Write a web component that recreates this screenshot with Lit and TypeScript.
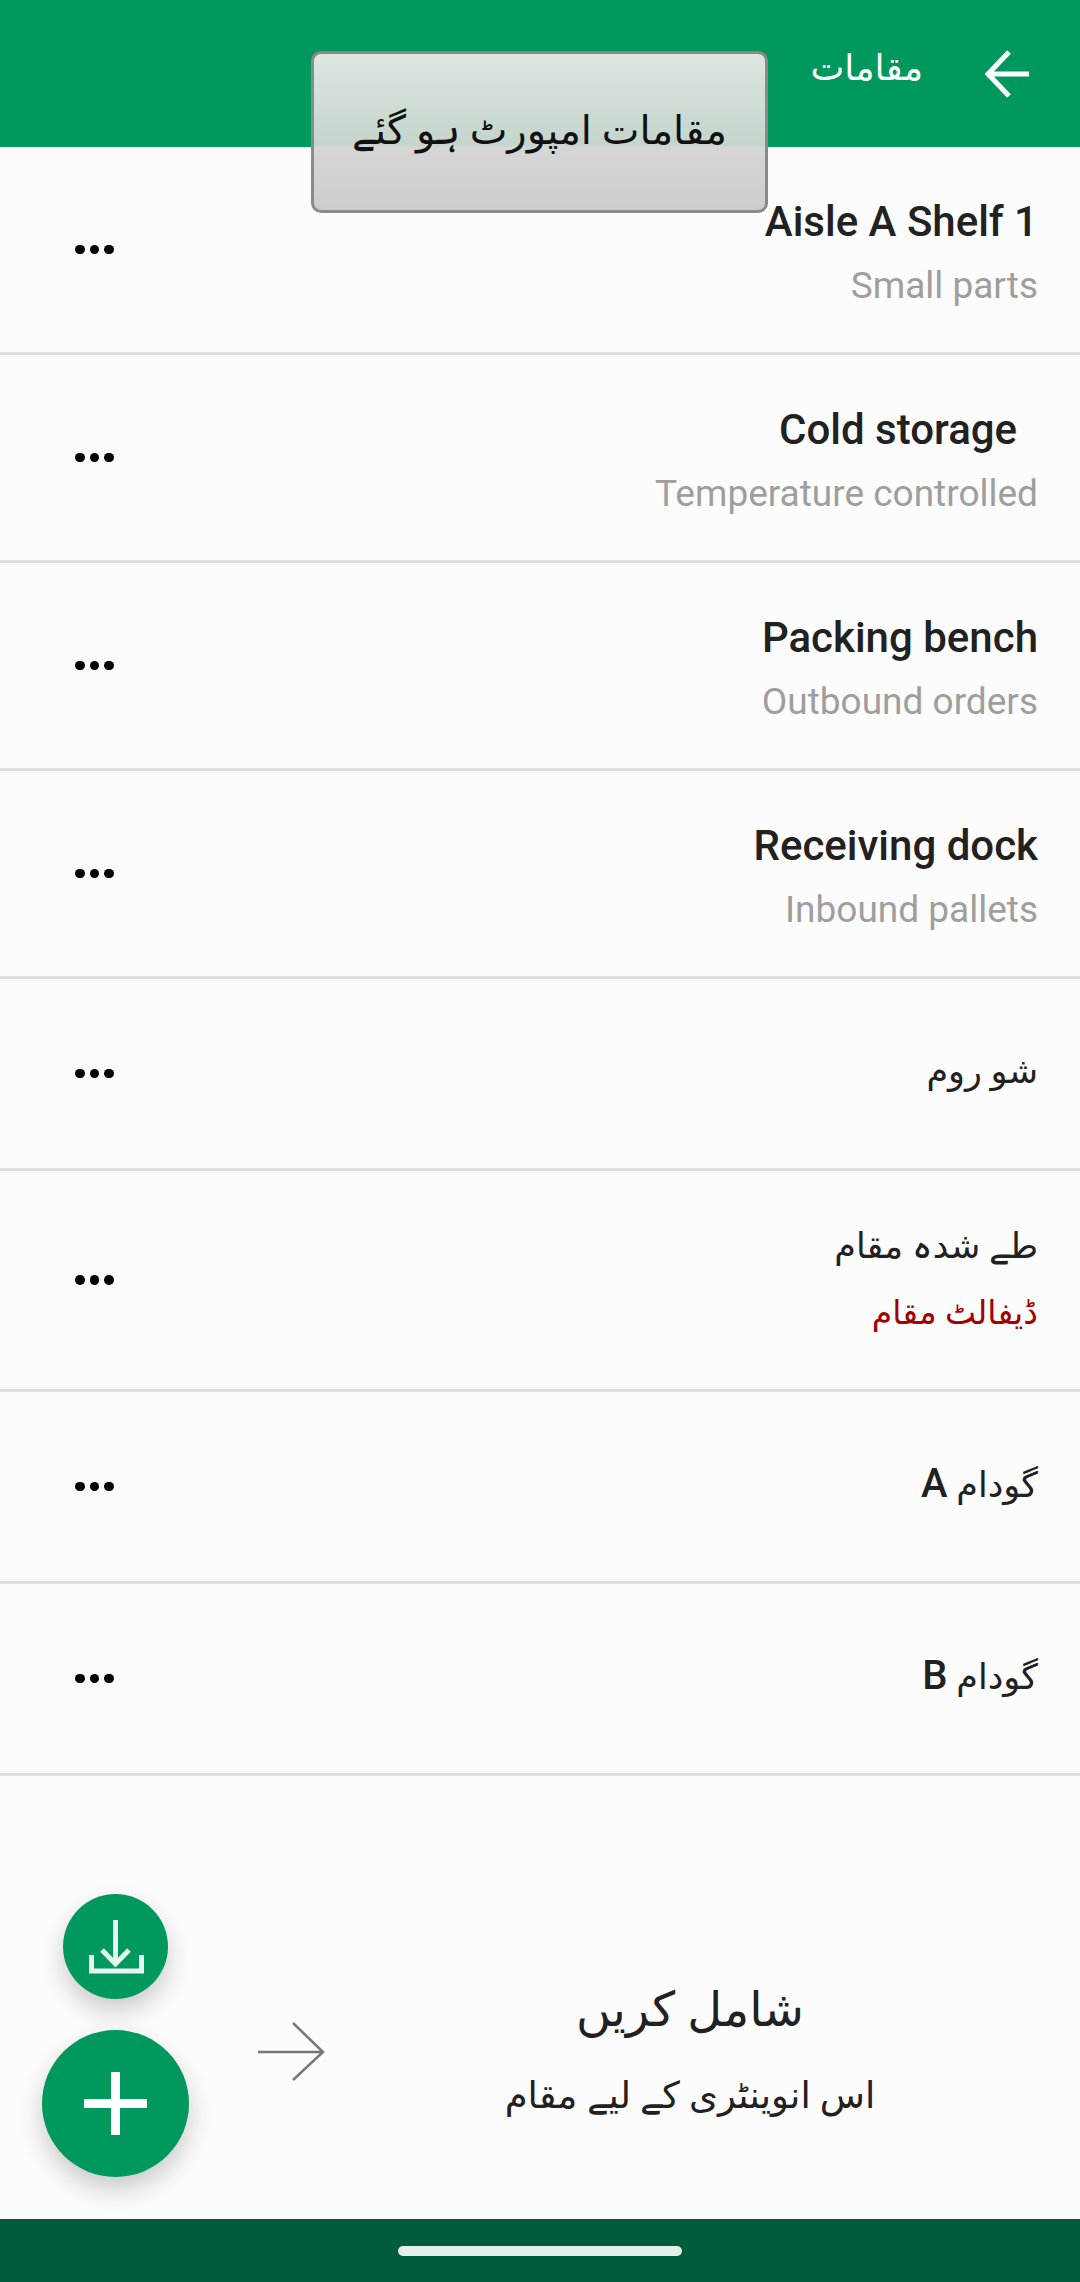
import { LitElement, html, css } from "lit";
import { customElement } from "lit/decorators.js";

type Row = { title: string; mark?: string; sub?: string; kind: "latin" | "urdu-one" | "urdu-two"; red?: boolean };

const rows: Row[] = [
  { title: "Aisle A Shelf 1", sub: "Small parts", kind: "latin" },
  { title: "\u00a0\u00a0Cold storage", sub: "Temperature controlled", kind: "latin" },
  { title: "Packing bench", sub: "Outbound orders", kind: "latin" },
  { title: "Receiving dock", sub: "Inbound pallets", kind: "latin" },
  { title: "شو روم", kind: "urdu-one" },
  { title: "طے شدہ مقام", sub: "ڈیفالٹ مقام", kind: "urdu-two", red: true },
  { title: "گودام ", mark: "A", kind: "urdu-one" },
  { title: "گودام ", mark: "B", kind: "urdu-one" },
];

@customElement("app-root")
export class AppRoot extends LitElement {
  static styles = css`
    :host {
      display: block;
      height: 2282px;
      font-family: "Roboto", "DejaVu Sans", sans-serif;
      color: #212121;
      background: #fcfcfc;
    }
    .page {
      position: relative;
      height: 100%;
      display: flex;
      flex-direction: column;
      direction: rtl;
      overflow: hidden;
    }
    .bar {
      flex: 0 0 147px;
      box-sizing: border-box;
      background: #00985d;
      display: flex;
      align-items: flex-start;
      padding: 50px 51px 0 0;
      gap: 62px;
      color: #fff;
    }
    .bar svg { display: block; width: 44px; height: 48px; }
    .bar h1 { margin: -7px 0 0; font-size: 36px; font-weight: 400; line-height: 50px; }
    .toast {
      position: absolute;
      left: 311px;
      top: 51px;
      width: 457px;
      height: 162px;
      box-sizing: border-box;
      border: 3px solid #8a8a8a;
      border-radius: 10px;
      background: linear-gradient(#dbe7df 0%, #c5d5cc 58%, #d6d6d6 60%, #cdcdcd 100%);
      display: flex;
      align-items: center;
      justify-content: center;
      padding-bottom: 4px;
      font-size: 40px;
      color: #111;
    }
    .list { display: flex; flex-direction: column; }
    .row {
      box-sizing: border-box;
      border-bottom: 3px solid #dedede;
      display: flex;
      align-items: center;
      justify-content: space-between;
      padding: 0 42px 0 75px;
    }
    .latin { height: 208px; }
    .urdu-one { height: 192px; }
    .urdu-two { height: 221px; }
    .text { display: flex; flex-direction: column; gap: 12px; }
    .latin .text { padding-top: 6px; }
    .urdu-two .text { gap: 14px; }
    .title { font-size: 42px; line-height: 54px; font-weight: 500; }
    .urdu-one .title, .urdu-two .title { font-size: 35px; font-weight: 400; }
    .urdu-one .title { margin-top: -3px; }
    .urdu-two .title { margin-top: -3px; }
    .mark { font-size: 40px; font-weight: 500; }
    .sub { font-size: 37px; line-height: 50px; color: #9e9e9e; }
    .urdu-two .sub { font-size: 33px; }
    .sub.red { color: #a50000; }
    .dots { display: flex; gap: 5px; }
    .dots i { width: 9.5px; height: 9.5px; border-radius: 50%; background: #000; }
    .hint {
      flex: 1;
      display: flex;
      flex-direction: column;
      align-items: center;
      justify-content: center;
      padding: 100px 0 0 300px;
      gap: 26px;
    }
    .hint .big { font-size: 48px; line-height: 70px; }
    .hint .small { font-size: 37px; line-height: 50px; }
    .arrow { position: absolute; left: 255px; top: 2020px; width: 70px; height: 64px; }
    .fab {
      position: absolute;
      border-radius: 50%;
      background: #00985d;
      box-shadow: 0 12px 26px rgba(0, 0, 0, 0.2);
      display: flex;
      align-items: center;
      justify-content: center;
    }
    .fab.small { left: 63px; top: 1894px; width: 105px; height: 105px; }
    .fab.large { left: 42px; top: 2030px; width: 147px; height: 147px; }
    .fab svg { display: block; }
    .nav {
      flex: 0 0 63px;
      background: #005c3c;
      display: flex;
      align-items: center;
      justify-content: center;
    }
    .pill { width: 284px; height: 10px; border-radius: 5px; background: #e6f0ea; }
  `;

  render() {
    return html`
      <div class="page">
        <header class="bar">
          <svg viewBox="0 0 44 48" fill="none" stroke="#fff" stroke-width="5">
            <path d="M44 24H3M24 2 3 24l21 22" />
          </svg>
          <h1>مقامات</h1>
        </header>
        <div class="list">
          ${rows.map(
            (r) => html`
              <div class="row ${r.kind}">
                <div class="text">
                  <div class="title">${r.title}${r.mark ? html`<span class="mark">${r.mark}</span>` : ""}</div>
                  ${r.sub ? html`<div class="sub ${r.red ? "red" : ""}">${r.sub}</div>` : ""}
                </div>
                <div class="dots"><i></i><i></i><i></i></div>
              </div>
            `
          )}
        </div>
        <div class="hint">
          <div class="big">شامل کریں</div>
          <div class="small">اس انوینٹری کے لیے مقام</div>
        </div>
        <div class="nav"><div class="pill"></div></div>
        <svg class="arrow" viewBox="0 0 70 64" fill="none" stroke="#777" stroke-width="2.5">
          <path d="M3 32H68M38 3 68 32 38 60" />
        </svg>
        <div class="fab small">
          <svg width="105" height="105" viewBox="0 0 105 105" fill="none" stroke="#e8f5ef" stroke-width="5">
            <path d="M52.5 26V70M39 56 52.5 70 66 56" />
            <path d="M28.5 61V77H78.5V61" />
          </svg>
        </div>
        <div class="fab large">
          <svg width="63" height="63" viewBox="0 0 63 63" fill="#fff">
            <path d="M27 0h9v27h27v9H36v27h-9V36H0v-9h27z" />
          </svg>
        </div>
        <div class="toast">مقامات امپورٹ ہو گئے</div>
      </div>
    `;
  }
}
